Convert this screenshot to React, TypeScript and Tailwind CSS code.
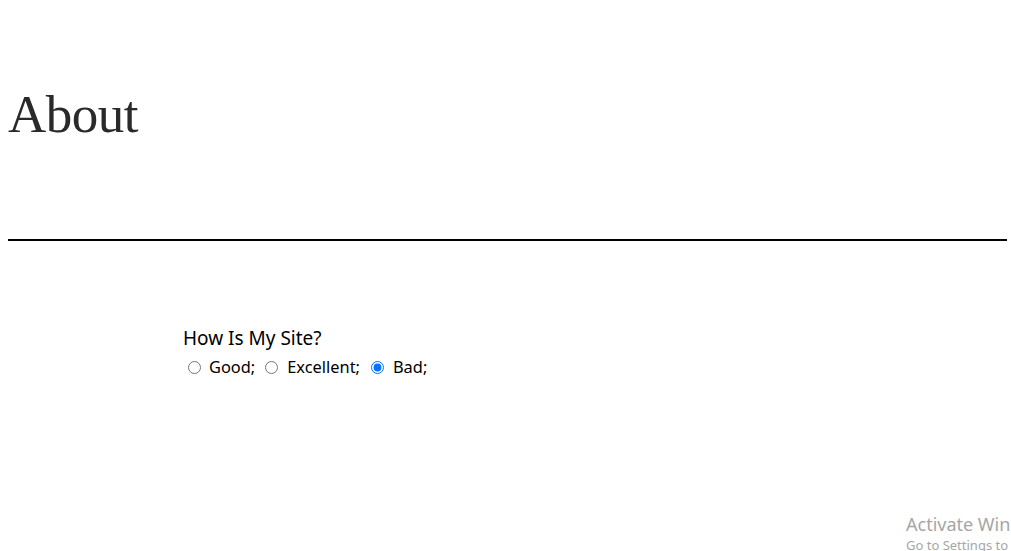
import React from "react";

export default function App() {
  return (
    <div className="relative w-[1011px] h-[551px] overflow-hidden bg-white text-black">
      <div className="pl-2 pr-1">
        <h1 className="pt-[79px] h-[239px] text-[53px] leading-[70px] tracking-[-0.01em] font-[Liberation_Serif,serif] font-normal text-[#2a2a2a]">
          About
        </h1>
        <div className="h-[2px] bg-black" />
        <div className="pl-[175px] pt-[85px] font-['Noto_Sans',sans-serif]">
          <div className="text-[19px] leading-[24px]">How Is My Site?</div>
          <div className="flex items-center text-[16.4px] leading-[22px] mt-[6px]">
            <label className="flex items-center">
              <input type="radio" name="site" className="ml-[5px] mr-[8px] w-[13px] h-[13px]" />
              Good;
            </label>
            <label className="flex items-center">
              <input type="radio" name="site" className="ml-[10px] mr-[9px] w-[13px] h-[13px]" />
              Excellent;
            </label>
            <label className="flex items-center">
              <input type="radio" name="site" defaultChecked className="ml-[11px] mr-[9px] w-[13px] h-[13px]" />
              Bad;
            </label>
          </div>
        </div>
      </div>
      <div className="absolute left-[906px] top-[512px] whitespace-nowrap font-['Noto_Sans',sans-serif] text-[#a6a6a6]">
        <div className="text-[18px] leading-[24px]">Activate Windows</div>
        <div className="text-[13px] leading-[18px]">Go to Settings to activate Windows.</div>
      </div>
    </div>
  );
}
